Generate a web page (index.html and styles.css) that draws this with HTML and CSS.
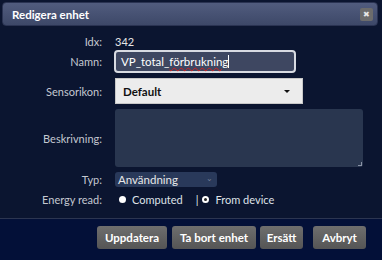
FILE: index.html
```html
<!DOCTYPE html>
<html lang="sv">
<head>
  <meta charset="UTF-8">
  <title>Redigera enhet</title>
  <link rel="stylesheet" href="styles.css">
</head>
<body>
  <div class="dialog">
    <div class="titlebar">
      <span class="title">Redigera enhet</span>
      <span class="close">&#10006;</span>
    </div>

    <div class="form">
      <div class="row row-idx">
        <label>Idx:</label>
        <span class="value">342</span>
      </div>
      <div class="row row-name">
        <label>Namn:</label>
        <div class="text-input">VP_total_<span class="spell">förbrukning</span><span class="caret"></span></div>
      </div>
      <div class="row row-icon">
        <label>Sensorikon:</label>
        <div class="icon-select">
          <span>Default</span>
          <span class="arrow"></span>
        </div>
      </div>
      <div class="row row-desc">
        <label>Beskrivning:</label>
        <div class="textarea"><span class="grip"></span></div>
      </div>
      <div class="row row-type">
        <label>Typ:</label>
        <div class="type-select">
          <span>Användning</span>
          <span class="chev">&#8964;</span>
        </div>
      </div>
      <div class="row row-energy">
        <label>Energy read:</label>
        <div class="radios">
          <span class="radio"></span><span class="radio-label">Computed</span>
          <span class="sep">|</span>
          <span class="radio checked"></span><span class="radio-label">From device</span>
        </div>
      </div>
    </div>

    <div class="footer">
      <button class="btn btn-update">Uppdatera</button>
      <button class="btn btn-delete">Ta bort enhet</button>
      <button class="btn btn-replace">Ersätt</button>
      <button class="btn btn-cancel">Avbryt</button>
    </div>
  </div>
</body>
</html>
```

FILE: styles.css
```css
html, body {
  margin: 0;
  padding: 0;
}
body {
  font-family: Lato, "Noto Sans", sans-serif;
  font-size: 11px;
  color: #e6e6e6;
  background-color: #0b1530;
  width: 382px;
  height: 260px;
  overflow: hidden;
}
.dialog {
  display: flex;
  flex-direction: column;
  height: 260px;
}
.titlebar {
  margin: 2px 4px 0 2px;
  height: 24px;
  box-sizing: border-box;
  border: 1px solid #2a3352;
  border-radius: 4px;
  background: linear-gradient(#515c7e, #3d4868);
  display: flex;
  align-items: center;
  justify-content: space-between;
  padding: 0 4px 0 9px;
}
.title {
  font-weight: bold;
  color: #fff;
  font-size: 11.5px;
}
.close {
  width: 13px;
  height: 13px;
  border-radius: 2px;
  background-color: #6c6c6c;
  color: #e8e8e8;
  font-size: 8px;
  line-height: 13px;
  text-align: center;
}

.form {
  display: flex;
  flex-direction: column;
  padding-top: 7px;
}
.row {
  display: flex;
  align-items: center;
  gap: 13px;
}
.row label {
  width: 102px;
  text-align: right;
  color: #c4c8d0;
  flex: none;
}
.value {
  color: #e6e6e6;
}
.row-idx {
  height: 16px;
}
.row-name {
  margin-top: 1px;
}
.text-input {
  margin-left: -1px;
  width: 182px;
  height: 23px;
  box-sizing: border-box;
  border: 2px solid #d8dbe2;
  border-radius: 4px;
  background-color: #3e4761;
  color: #fff;
  padding: 3px 0 0 5px;
  font-size: 11.5px;
}
.spell {
  text-decoration: underline wavy #d02020;
  text-decoration-thickness: 1px;
}
.caret {
  display: inline-block;
  width: 1px;
  height: 13px;
  background-color: #fff;
  vertical-align: -2px;
}
.row-icon {
  margin-top: 5px;
}
.icon-select {
  width: 188px;
  height: 26px;
  box-sizing: border-box;
  background-color: #ececec;
  border: 1px solid #c8c8c8;
  color: #111;
  font-weight: bold;
  font-size: 11.5px;
  display: flex;
  align-items: center;
  justify-content: space-between;
  padding: 0 12px 0 7px;
}
.arrow {
  width: 0;
  height: 0;
  border-left: 3px solid transparent;
  border-right: 3px solid transparent;
  border-top: 3px solid #111;
}
.row-desc {
  margin-top: 5px;
}
.textarea {
  position: relative;
  width: 248px;
  height: 58px;
  border-radius: 3px;
  background-color: #29364f;
}
.grip {
  position: absolute;
  right: 1px;
  bottom: 1px;
  width: 3px;
  height: 3px;
  border-right: 1px solid #8a93a6;
  border-bottom: 1px solid #8a93a6;
}
.row-type {
  margin-top: 5px;
}
.type-select {
  width: 102px;
  height: 15px;
  box-sizing: border-box;
  border-radius: 3px;
  background-color: #29395a;
  color: #e8e8e8;
  font-size: 11.5px;
  display: flex;
  align-items: center;
  justify-content: space-between;
  padding: 0 4px 0 3px;
}
.chev {
  color: #6f7b93;
  font-size: 8px;
  line-height: 8px;
  margin-top: -4px;
}
.row-energy {
  margin-top: 4px;
  height: 16px;
}
.radios {
  display: flex;
  align-items: center;
  padding-left: 4px;
}
.radio {
  width: 7px;
  height: 7px;
  border-radius: 50%;
  background-color: #fff;
  box-sizing: border-box;
}
.radio.checked {
  border: 2px solid #fff;
  background-color: #222;
}
.radio-label {
  margin-left: 6px;
  color: #dfe2e8;
}
.sep {
  margin-left: 13px;
  margin-right: 4px;
  color: #dfe2e8;
}

.footer {
  margin-top: 11px;
  border-top: 1px solid #2c3550;
  background-color: #031038;
  flex: 1;
  display: flex;
  justify-content: flex-end;
  align-items: flex-start;
  gap: 4px;
  padding: 7px 16px 0 0;
}
.btn {
  height: 23px;
  border: none;
  border-radius: 3px;
  background: linear-gradient(#6e6e6e, #555);
  color: #fff;
  font-family: Lato, "Noto Sans", sans-serif;
  font-weight: bold;
  font-size: 11.5px;
  padding: 0;
  cursor: pointer;
}
.btn-update {
  width: 70px;
  margin-right: 1px;
}
.btn-delete {
  width: 84px;
}
.btn-replace {
  width: 43px;
}
.btn-cancel {
  width: 53px;
  margin-left: 6px;
}
```
